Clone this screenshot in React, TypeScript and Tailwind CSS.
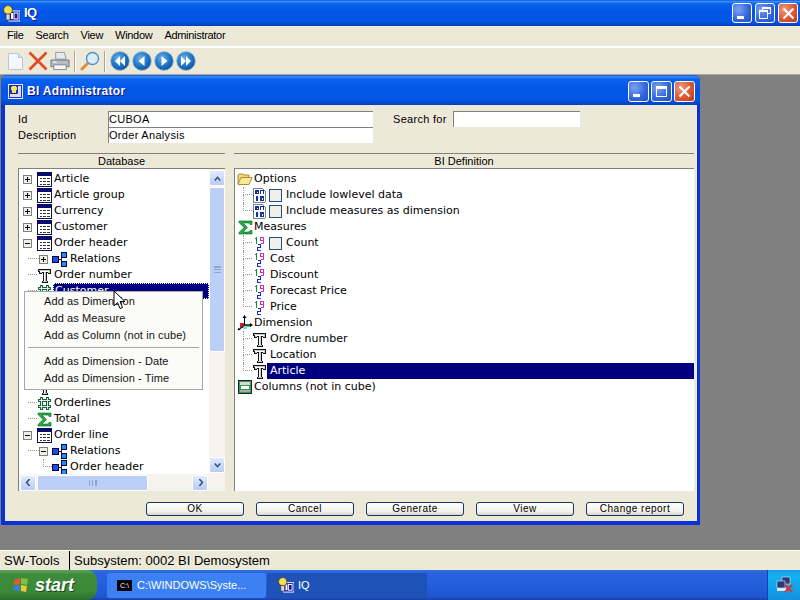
import type { ReactNode } from "react";

const uiFont = "font-['DejaVu_Sans',sans-serif]";
const menuFont = "font-['Liberation_Sans',sans-serif]";

const xpBar =
  "bg-[linear-gradient(to_bottom,#0a5be0_0%,#3a8cf5_6%,#0a62ee_14%,#0355e6_50%,#0258e8_80%,#0349cf_92%,#0340b8_100%)]";

function Crisp({ w, h, children }: { w: number; h: number; children: ReactNode }) {
  return (
    <svg width={w} height={h} viewBox={`0 0 ${w} ${h}`} shapeRendering="crispEdges" className="shrink-0">
      {children}
    </svg>
  );
}

function TableIcon() {
  return (
    <Crisp w={15} h={15}>
      <rect x="0.5" y="0.5" width="14" height="14" fill="#fff" stroke="#10104a" />
      <rect x="0" y="0" width="15" height="4" fill="#0a0a6a" />
      <path d="M3 6.5h2M6 6.5h3M10 6.5h3M3 9.5h2M6 9.5h3M10 9.5h3M3 12.5h2M6 12.5h3M10 12.5h3" stroke="#333" />
    </Crisp>
  );
}

function RelationsIcon() {
  return (
    <Crisp w={15} h={15}>
      <path d="M7 7.5h2M9 3.500v8M9 3.500h1M9 11.500h1" stroke="#222" fill="none" />
      <rect x="0.5" y="4.5" width="6" height="6" fill="#1d50d8" stroke="#000050" />
      <rect x="9.5" y="0.5" width="5" height="5" fill="#1a90f0" stroke="#000050" />
      <rect x="9.5" y="9.5" width="5" height="5" fill="#1a90f0" stroke="#000050" />
    </Crisp>
  );
}

function TIcon() {
  return (
    <Crisp w={15} h={15}>
      <path d="M1.500 1.500h12v4h-2l-1-1h-1v8l1 1v1h-5v-1l1-1v-8h-1l-1 1h-2z" fill="#c9c9c9" stroke="#111" />
      <path d="M3 3h9M7 5v8" stroke="#fff" />
    </Crisp>
  );
}

function HashIcon() {
  return (
    <Crisp w={15} h={15}>
      <path d="M4.500 1v13M10.500 1v13M1 4.500h13M1 10.500h13" stroke="#16603c" strokeWidth="3" fill="none" />
      <path d="M4.500 2v11M10.500 2v11M2 4.500h11M2 10.500h11" stroke="#d8f4e0" fill="none" />
      <rect x="6" y="6" width="3" height="3" fill="#fff" />
    </Crisp>
  );
}

function SigmaIcon() {
  return (
    <svg width="15" height="15" viewBox="0 0 15 15" className="shrink-0">
      <path d="M1 1h13v3.500h-2L11 3H5l4.500 4.500L5 12h6l1-1.500h2V14H1v-1.500L6 7.500 1 2.500z" fill="#20b040" stroke="#0a6020" strokeWidth="0.6" />
    </svg>
  );
}

function FolderIcon() {
  return (
    <svg width="16" height="14" viewBox="0 0 16 14" className="shrink-0">
      <path d="M1 12V3l1-1h4l1 1h5v2" fill="#f4d878" stroke="#a89038" />
      <path d="M1 12.500l3-7h11l-3 7z" fill="#fbe89a" stroke="#a89038" />
    </svg>
  );
}

function OptionIcon() {
  return (
    <Crisp w={15} h={15}>
      <path d="M1.500.5h9l3 3v10l-1 1h-11z" fill="#fff" stroke="#77808c" />
      <path d="M3 2h4v4H3zM8 2h4v1H8zM8 3h1v3H8zM11 3h1v3h-1zM4 8h2v5H4zM8 8h4v5H8z" fill="#14309c" />
      <path d="M4.500 3.500h1v1h-1zM9.500 9.500h1v2h-1z" fill="#fff" />
      <rect x="1" y="7" width="1" height="1" fill="#14309c" />
    </Crisp>
  );
}

function NumberIcon() {
  return (
    <Crisp w={11} h={15}>
      <path d="M2 1h1v7H2zM1 2h1v1H1z" fill="#1a8a30" />
      <path d="M6.500 1.500h3v3h-3zM9.500 4.500v3h-3" stroke="#d030c8" fill="none" />
      <path d="M3.500 8.500h3v3h-3v3h3" stroke="#1c28c8" fill="none" />
    </Crisp>
  );
}

function AxisIcon() {
  return (
    <svg width="16" height="16" viewBox="0 0 16 16" className="shrink-0">
      <rect x="7" y="9" width="6" height="3" fill="#40c860" />
      <rect x="3" y="8" width="5" height="5" fill="#d02020" />
      <rect x="6" y="11" width="4" height="3" fill="#70d8f0" />
      <path d="M7.500 1v9M7.500 10l6 0M7.500 10L2 15" stroke="#000" fill="none" />
      <path d="M7.500 0l-2 3h4zM16 10l-3-2v4zM0.500 15.500l1-3 2 2z" fill="#000" />
    </svg>
  );
}

function ColumnsIcon() {
  return (
    <Crisp w={14} h={14}>
      <rect x="0.5" y="0.5" width="13" height="13" fill="#30a050" stroke="#222" />
      <rect x="2" y="2" width="10" height="3" fill="#d8d8d8" />
      <rect x="3" y="6" width="8" height="3" fill="#fff" />
      <rect x="2" y="10" width="10" height="2" fill="#a8a8a8" />
    </Crisp>
  );
}

function ExpandBox({ open }: { open?: boolean }) {
  return (
    <span className="flex h-[9px] w-[9px] shrink-0 items-center justify-center border border-[#808080] bg-[#f0f0e8]">
      <span className="relative block h-px w-[5px] bg-black">
        {!open && <span className="absolute left-[2px] top-[-2px] h-[5px] w-px bg-black" />}
      </span>
    </span>
  );
}

function TreeCheck() {
  return <span className="h-[13px] w-[13px] shrink-0 border border-[#1c5180] bg-[#f0f0ea]" />;
}

// dotted connector between parent and child rows
function Stub({ w, vertical, last }: { w: string; vertical?: boolean; last?: boolean }) {
  const side = vertical ? "border-l border-dotted border-[#9a9a9a]" : "";
  return (
    <span className={`flex h-4 shrink-0 flex-col ${w}`}>
      <span className={`h-2 w-full border-b border-dotted border-[#9a9a9a] ${side}`} />
      <span className={`h-2 w-full ${last ? "" : side}`} />
    </span>
  );
}

function Row({ children, className = "" }: { children: ReactNode; className?: string }) {
  return <div className={`flex h-4 items-center whitespace-nowrap ${className}`}>{children}</div>;
}

function Label({ children, selected, className = "" }: { children: ReactNode; selected?: boolean; className?: string }) {
  return (
    <span className={`flex h-4 items-center ${selected ? "bg-[#00007f] text-white" : ""} ${className}`}>
      {children}
    </span>
  );
}

function TopRow({ icon, open, text }: { icon: ReactNode; open?: boolean; text: string }) {
  return (
    <Row className="pl-[4px]">
      <ExpandBox open={open} />
      <span className="ml-[5px] mr-[2px] flex">{icon}</span>
      <Label>{text}</Label>
    </Row>
  );
}

function ChildRow({ icon, text, children }: { icon: ReactNode; text?: string; children?: ReactNode }) {
  return (
    <Row className="pl-[9px]">
      <Stub w="w-[9px]" />
      <span className="mr-[1px] flex">{icon}</span>
      {text && <Label className="pl-[1px]">{text}</Label>}
      {children}
    </Row>
  );
}

function RelationsRow({ open }: { open?: boolean }) {
  return (
    <Row className="pl-[9px]">
      <Stub w="w-[11px]" />
      <ExpandBox open={open} />
      <span className="ml-[4px] mr-[3px] flex">
        <RelationsIcon />
      </span>
      <Label>Relations</Label>
    </Row>
  );
}

function DefHead({ icon, text }: { icon: ReactNode; text: string }) {
  return (
    <Row className="pl-[2px]">
      <span className="mr-px flex w-[16px] justify-center">{icon}</span>
      <Label>{text}</Label>
    </Row>
  );
}

function DefChild({
  icon,
  text,
  check,
  last,
  selected,
}: {
  icon: ReactNode;
  text: string;
  check?: boolean;
  last?: boolean;
  selected?: boolean;
}) {
  return (
    <Row className="pl-[8px]">
      <Stub w="w-[9px]" vertical last={last} />
      <span className="flex w-[15px] shrink-0 justify-center">{icon}</span>
      {check && (
        <span className="ml-[2px] mr-[4px] flex">
          <TreeCheck />
        </span>
      )}
      <Label selected={selected} className={selected ? "flex-1 pl-[3px]" : check ? "" : "pl-[3px]"}>
        {text}
      </Label>
    </Row>
  );
}

function ScrollArrow({ d }: { d: string }) {
  return (
    <span className="flex h-[16px] w-[16px] shrink-0 items-center justify-center rounded-[2px] border border-white bg-[linear-gradient(to_bottom,#e2ebfd,#b6cbf6)]">
      <svg width="9" height="7" viewBox="0 0 9 9" fill="none">
        <path d={d} stroke="#35527f" strokeWidth="2" />
      </svg>
    </span>
  );
}

function Caption({ children }: { children: ReactNode }) {
  return (
    <div className={`flex h-[16px] shrink-0 items-center justify-center border-y border-[#808080] bg-[#ece9d8] text-[11px] text-black ${menuFont}`}>
      {children}
    </div>
  );
}

function DialogButton({ children }: { children: ReactNode }) {
  return (
    <button className={`flex h-[14px] w-[98px] items-center justify-center rounded-[3px] border border-[#17375e] bg-[linear-gradient(to_bottom,#fefefe,#f2f1ea_70%,#d8d5c8)] text-[10px] leading-none tracking-[0.5px] text-black ${menuFont}`}>
      {children}
    </button>
  );
}

function CaptionButton({ tone, wide, children }: { tone: "blue" | "red"; wide?: boolean; children: ReactNode }) {
  const bg =
    tone === "red"
      ? "bg-[radial-gradient(circle_at_30%_30%,#e99a80,#d9532c_60%,#b43a1a)]"
      : "bg-[radial-gradient(circle_at_30%_30%,#7ba2f2,#3164dc_60%,#2451c8)]";
  return (
    <span
      className={`flex items-center justify-center rounded-[3px] border border-white ${bg} ${wide ? "h-[21px] w-[21px]" : "h-[20px] w-[20px]"}`}
    >
      {children}
    </span>
  );
}

function Minimize() {
  return <span className="mt-[9px] mr-[4px] h-[3px] w-[7px] bg-white" />;
}

function CloseGlyph() {
  return (
    <svg width="13" height="13" viewBox="0 0 13 13">
      <path d="M1.500 1.500l10 10M11.500 1.500l-10 10" stroke="#fff" strokeWidth="2" />
    </svg>
  );
}

function RestoreGlyph() {
  return (
    <svg width="12" height="12" viewBox="0 0 12 12" shapeRendering="crispEdges" fill="none">
      <path d="M3.500 3V.5h8v6H9" stroke="#fff" />
      <rect x="0.5" y="3.5" width="8" height="8" stroke="#fff" />
      <path d="M1 4.500h7M4 1.500h7" stroke="#fff" />
    </svg>
  );
}

function MaximizeGlyph() {
  return (
    <svg width="13" height="13" viewBox="0 0 13 13" shapeRendering="crispEdges" fill="none">
      <rect x="1.5" y="1.5" width="10" height="10" stroke="#fff" />
      <path d="M1 2.500h11M1 3.500h11" stroke="#fff" />
    </svg>
  );
}

function BulbIcon({ size = 17 }: { size?: number }) {
  return (
    <svg width={size} height={size} viewBox="0 0 17 17" className="shrink-0">
      <rect x="6" y="6" width="11" height="10" fill="#1818a0" stroke="#fff" />
      <rect x="8" y="8" width="2" height="6" fill="#fff" />
      <rect x="11" y="8" width="4" height="6" fill="none" stroke="#fff" />
      <circle cx="5" cy="5" r="4.400" fill="#f4e04a" stroke="#333" strokeWidth="0.7" />
      <rect x="3" y="9" width="4" height="6" fill="#d8d8d8" stroke="#333" strokeWidth="0.7" />
    </svg>
  );
}

function DialogIcon() {
  return (
    <svg width="15" height="15" viewBox="0 0 15 15" shapeRendering="crispEdges" className="shrink-0">
      <rect x="0.5" y="0.5" width="14" height="14" fill="#2a2ac0" stroke="#e8ecf8" />
      <path d="M10 2h3v11h-3zM2 10h8v3H2z" fill="#d8dcf0" />
      <path d="M4 2h4v1h1v3H8v3H4V6H3V3h1z" fill="#f4e86a" />
      <path d="M4 9h4v1H4z" fill="#222" />
    </svg>
  );
}

function NavButton({ d }: { d: string }) {
  return (
    <svg width="20" height="20" viewBox="0 0 20 20" className="shrink-0">
      <defs>
        <radialGradient id="nav" cx="40%" cy="35%" r="70%">
          <stop offset="0%" stopColor="#6ab0e8" />
          <stop offset="60%" stopColor="#1f74c4" />
          <stop offset="100%" stopColor="#0d4f9a" />
        </radialGradient>
      </defs>
      <circle cx="10" cy="10" r="9.400" fill="url(#nav)" stroke="#a8c4dc" strokeWidth="0.8" />
      <path d={d} fill="#fff" />
    </svg>
  );
}

function ToolSep() {
  return <span className="mx-[4px] h-[21px] w-[2px] border-l border-[#a8a598] bg-white" />;
}

function Toolbar() {
  return (
    <div className="flex h-[26px] shrink-0 items-center bg-[#ece9d8] pl-[8px]">
      <svg width="15" height="18" viewBox="0 0 15 18" className="shrink-0">
        <path d="M.5 1.500h10l4 4v12H.5z" fill="#f4f8fe" stroke="#b4c6de" />
        <path d="M10.500 1.500v4h4" fill="#d8e4f4" stroke="#b4c6de" />
      </svg>
      <svg width="20" height="20" viewBox="0 0 20 20" className="ml-[5px] shrink-0">
        <path d="M1.500 1.500l17 17M18.500 1.500l-17 17" stroke="#e04a24" strokeWidth="2.6" />
      </svg>
      <svg width="20" height="20" viewBox="0 0 21 20" className="ml-[2px] shrink-0">
        <path d="M6 1h9l2 7H6z" fill="#e8ecf2" stroke="#8898ac" />
        <path d="M1 9h19v7H1z" fill="#b8bec4" stroke="#6a7078" />
        <path d="M4 14h13v5H4z" fill="#f4f4f4" stroke="#808890" />
        <path d="M3 11h4" stroke="#fff" />
      </svg>
      <ToolSep />
      <svg width="20" height="20" viewBox="0 0 20 20" className="shrink-0">
        <path d="M8 12l-6 6" stroke="#d89040" strokeWidth="3" strokeLinecap="round" />
        <circle cx="12.500" cy="7.500" r="6" fill="#d8ecfa" stroke="#5a90c0" strokeWidth="1.4" />
      </svg>
      <ToolSep />
      <span className="flex gap-[2px]">
        <NavButton d="M10 5v10l-5-5zM15 5v10l-5-5z" />
        <NavButton d="M12.500 5v10l-6-5z" />
        <NavButton d="M7.500 5v10l6-5z" />
        <NavButton d="M5 5v10l5-5zM10 5v10l5-5z" />
      </span>
    </div>
  );
}

function DatabaseTree() {
  return (
    <div className="relative flex w-[207px] shrink-0 flex-col">
      <Caption>Database</Caption>
      <div className="flex h-[305px] border-l border-[#808080] bg-white">
        <div className="min-w-0 flex-1 overflow-hidden pt-[2px]">
          <TopRow icon={<TableIcon />} text="Article" />
          <TopRow icon={<TableIcon />} text="Article group" />
          <TopRow icon={<TableIcon />} text="Currency" />
          <TopRow icon={<TableIcon />} text="Customer" />
          <TopRow icon={<TableIcon />} open text="Order header" />
          <RelationsRow />
          <ChildRow icon={<TIcon />} text="Order number" />
          <ChildRow icon={<HashIcon />}>
            <span className="flex h-4 flex-1 items-center border border-dotted border-white bg-[#00007f] pl-[1px] text-white">
              Customer
            </span>
          </ChildRow>
          {/* rows hidden behind the context menu */}
          <div className="h-[80px]" />
          <ChildRow icon={<TIcon />} />
          <ChildRow icon={<HashIcon />} text="Orderlines" />
          <ChildRow icon={<SigmaIcon />} text="Total" />
          <TopRow icon={<TableIcon />} open text="Order line" />
          <RelationsRow open />
          <Row className="pl-[24px]">
            <Stub w="w-[9px]" vertical last />
            <span className="mr-[3px] flex">
              <RelationsIcon />
            </span>
            <Label>Order header</Label>
          </Row>
        </div>
        <div className="flex w-[16px] shrink-0 flex-col bg-[#f4f3ee] py-px">
          <ScrollArrow d="M1 7l3.500-4 3.500 4" />
          <div className="mt-px flex h-[165px] items-center justify-center rounded-[2px] border border-white bg-[#bccff7]">
            <span className="h-[7px] w-[7px] border-y border-[#8ea4d4] bg-[linear-gradient(to_bottom,#8ea4d4_1px,transparent_1px,transparent_2px,#8ea4d4_2px,#8ea4d4_3px,transparent_3px)]" />
          </div>
          <div className="flex-1" />
          <ScrollArrow d="M1 2l3.500 4 3.500-4" />
        </div>
      </div>
      <div className="flex h-[17px] items-center border-l border-[#808080] bg-[#f4f3ee] pl-[1px]">
        <ScrollArrow d="M6 0l-4 4.500 4 4.500" />
        <div className="ml-[1px] flex h-[16px] w-[111px] items-center justify-center rounded-[2px] border border-white bg-[#bccff7]">
          <span className="h-[6px] w-[8px] border-x border-[#8ea4d4] bg-[linear-gradient(to_right,transparent_2px,#8ea4d4_2px,#8ea4d4_3px,transparent_3px,transparent_5px,#8ea4d4_5px,#8ea4d4_6px,transparent_6px)]" />
        </div>
        <div className="flex-1" />
        <ScrollArrow d="M3 0l4 4.500-4 4.500" />
        <div className="w-[17px]" />
      </div>

      {/* context menu, lying over the tree */}
      <div className={`absolute left-[6px] top-[138px] flex h-[99px] w-[179px] flex-col border border-[#a7a6aa] bg-[#fbfbf8] pt-[1px] text-[#111] ${menuFont} tracking-[0.1px]`}>
        <div className="flex h-[17px] shrink-0 items-center pl-[19px]">Add as Dimension</div>
        <div className="flex h-[17px] shrink-0 items-center pl-[19px]">Add as Measure</div>
        <div className="flex h-[17px] shrink-0 items-center pl-[19px]">Add as Column (not in cube)</div>
        <div className="mx-[3px] mb-[5px] mt-[3px] h-px shrink-0 bg-[#a7a6aa]" />
        <div className="flex h-[17px] shrink-0 items-center pl-[19px]">Add as Dimension - Date</div>
        <div className="flex h-[17px] shrink-0 items-center pl-[19px]">Add as Dimension - Time</div>
      </div>

      {/* mouse pointer */}
      <svg width="13" height="20" viewBox="0 0 13 20" className="absolute left-[95px] top-[137px]">
        <path d="M1 1v15l3.500-3.500 2.500 6 2.500-1-2.500-6h5z" fill="#fff" stroke="#000" />
      </svg>
    </div>
  );
}

function DefinitionTree() {
  return (
    <div className="flex min-w-0 flex-1 flex-col">
      <Caption>BI Definition</Caption>
      <div className="h-[322px] border-l border-[#808080] bg-white pt-[2px]">
        <DefHead icon={<FolderIcon />} text="Options" />
        <DefChild icon={<OptionIcon />} check text="Include lowlevel data" />
        <DefChild icon={<OptionIcon />} check last text="Include measures as dimension" />
        <DefHead icon={<SigmaIcon />} text="Measures" />
        <DefChild icon={<NumberIcon />} check text="Count" />
        <DefChild icon={<NumberIcon />} text="Cost" />
        <DefChild icon={<NumberIcon />} text="Discount" />
        <DefChild icon={<NumberIcon />} text="Forecast Price" />
        <DefChild icon={<NumberIcon />} last text="Price" />
        <DefHead icon={<AxisIcon />} text="Dimension" />
        <DefChild icon={<TIcon />} text="Ordre number" />
        <DefChild icon={<TIcon />} text="Location" />
        <DefChild icon={<TIcon />} last selected text="Article" />
        <DefHead icon={<ColumnsIcon />} text="Columns (not in cube)" />
      </div>
    </div>
  );
}

function Dialog() {
  return (
    <div className="ml-[1px] w-[699px] rounded-t-[6px] bg-[#0831d9] pb-[4px] pl-[4px] pr-[3px]">
      <div className={`-ml-[4px] -mr-[3px] flex h-[30px] items-center rounded-t-[6px] pl-[7px] pr-[5px] pt-[2px] ${xpBar}`}>
        <DialogIcon />
        <span className={`ml-[4px] flex-1 text-[12px] font-bold tracking-[0.3px] text-white [text-shadow:1px_1px_#0f1089] ${menuFont}`}>
          BI Administrator
        </span>
        <span className="flex gap-[2px]">
          <CaptionButton tone="blue" wide>
            <Minimize />
          </CaptionButton>
          <CaptionButton tone="blue" wide>
            <MaximizeGlyph />
          </CaptionButton>
          <CaptionButton tone="red" wide>
            <CloseGlyph />
          </CaptionButton>
        </span>
      </div>
      <div className={`h-[416px] bg-[#ece9d8] pl-[13px] pr-[3px] pt-[6px] text-[11px] text-black ${uiFont}`}>
        <div className={`flex h-[16px] items-center tracking-[0.3px] ${menuFont}`}>
          <span className="w-[90px]">Id</span>
          <span className="flex h-[16px] w-[265px] items-center border-l border-t border-[#808080] bg-white">CUBOA</span>
          <span className="ml-[20px] w-[60px]">Search for</span>
          <span className="h-[16px] w-[127px] border-l border-t border-[#808080] bg-white" />
        </div>
        <div className={`flex h-[16px] items-center tracking-[0.3px] ${menuFont}`}>
          <span className="w-[90px]">Description</span>
          <span className="flex h-[16px] w-[265px] items-center border-l border-t border-[#808080] bg-white">
            Order Analysis
          </span>
        </div>
        <div className="mt-[10px] flex gap-[9px]">
          <DatabaseTree />
          <DefinitionTree />
        </div>
        <div className="mt-[11px] flex gap-[12px] pl-[128px]">
          <DialogButton>OK</DialogButton>
          <DialogButton>Cancel</DialogButton>
          <DialogButton>Generate</DialogButton>
          <DialogButton>View</DialogButton>
          <DialogButton>Change report</DialogButton>
        </div>
      </div>
    </div>
  );
}

function Taskbar() {
  return (
    <div className={`flex h-[30px] items-center text-[11px] text-white ${menuFont} bg-[linear-gradient(to_bottom,#2f6fe0_0%,#2a63dc_12%,#245edb_50%,#2055cf_90%,#1941a5_100%)]`}>
      <div className="flex h-full w-[97px] items-center rounded-r-[10px] bg-[linear-gradient(to_bottom,#5ea35c_0%,#3c8c3c_15%,#3a8a3a_70%,#2d6e2d_100%)] pl-[12px]">
        <svg width="18" height="18" viewBox="0 0 18 18" className="shrink-0">
          <path d="M2 4l6-2v6l-6 1z" fill="#e8542c" />
          <path d="M9 2l7 1-1 6-6-1z" fill="#7cc040" />
          <path d="M2 10l6-1v6l-7-1z" fill="#3a80e0" />
          <path d="M9 9l6 1-1 6-5-1z" fill="#f4c830" />
        </svg>
        <span className="ml-[5px] text-[18px] font-bold italic [text-shadow:1px_1px_#1a4a1a]">start</span>
      </div>
      <div className="ml-[10px] flex h-[25px] w-[159px] items-center rounded-[2px] bg-[#3c81f3] pl-[10px]">
        <span className="flex h-[11px] w-[15px] items-center justify-center bg-black text-[7px] leading-none text-white">
          C:\
        </span>
        <span className="ml-[5px] truncate">C:\WINDOWS\Syste...</span>
      </div>
      <div className="ml-px flex h-[25px] w-[160px] items-center rounded-[2px] bg-[#1e52b7] pl-[11px]">
        <BulbIcon size={16} />
        <span className="ml-[4px]">IQ</span>
      </div>
      <div className="flex-1" />
      <div className="flex h-full w-[33px] items-center justify-center border-l border-[#1042af] bg-[linear-gradient(to_bottom,#1c9ae8,#12b2f0_20%,#1290e0)]">
        <svg width="18" height="18" viewBox="0 0 18 18" className="shrink-0">
          <rect x="7" y="1" width="8" height="7" fill="#2a3a7a" stroke="#dfe8f8" strokeWidth="0.6" />
          <rect x="2" y="5" width="8" height="7" fill="#2a3a7a" stroke="#dfe8f8" strokeWidth="0.6" />
          <rect x="2" y="12" width="9" height="3" fill="#dfe8f8" />
          <path d="M10 9l7 7M17 9l-7 7" stroke="#e03030" strokeWidth="2" />
        </svg>
      </div>
    </div>
  );
}

export default function App() {
  return (
    <div className="flex h-[600px] w-[800px] flex-col overflow-hidden bg-[#808080]">
      <div className={`flex h-[26px] shrink-0 items-center pl-[3px] pr-[2px] ${xpBar}`}>
        <BulbIcon />
        <span className={`ml-[4px] flex-1 text-[13px] font-bold tracking-[-0.5px] text-white [text-shadow:1px_1px_#0f1089] ${menuFont}`}>
          IQ
        </span>
        <span className="flex gap-[3px]">
          <CaptionButton tone="blue">
            <Minimize />
          </CaptionButton>
          <CaptionButton tone="blue">
            <RestoreGlyph />
          </CaptionButton>
          <CaptionButton tone="red">
            <CloseGlyph />
          </CaptionButton>
        </span>
      </div>
      <div className={`flex h-[20px] shrink-0 items-center gap-[12px] bg-[#ece9d8] pb-[2px] pl-[7px] text-[11px] tracking-[-0.3px] text-black ${menuFont}`}>
        <span>File</span>
        <span>Search</span>
        <span>View</span>
        <span>Window</span>
        <span>Administrator</span>
      </div>
      <div className="h-[2px] shrink-0 bg-white" />
      <Toolbar />
      <div className="min-h-0 flex-1 border-t border-[#aca899]">
        <Dialog />
      </div>
      <div className={`flex h-[20px] shrink-0 items-center border-t border-white bg-[#ece9d8] text-[13px] text-black ${menuFont}`}>
        <span className="w-[69px] pl-[4px]">SW-Tools</span>
        <span className="h-[19px] w-px bg-black" />
        <span className="pl-[4px]">Subsystem: 0002 BI Demosystem</span>
      </div>
      <Taskbar />
    </div>
  );
}
